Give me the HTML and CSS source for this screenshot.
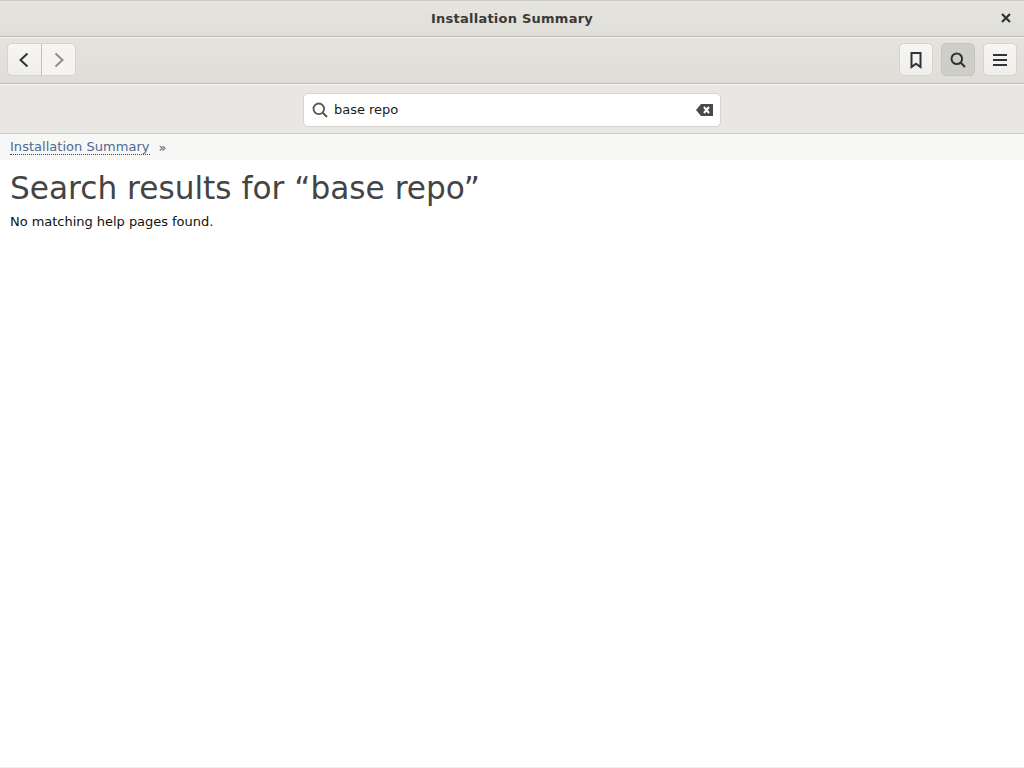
FILE: index.html
```html
<!DOCTYPE html>
<html lang="en">
<head>
<meta charset="utf-8">
<title>Installation Summary</title>
<link rel="stylesheet" href="styles.css">
</head>
<body>
<div class="app">
  <header class="titlebar">
    <span class="title">Installation Summary</span>
    <button class="close" aria-label="Close">
      <svg width="16" height="16" viewBox="0 0 16 16"><path d="M4 4l8 8M12 4l-8 8" class="ink" stroke-width="2.2" fill="none"/></svg>
    </button>
  </header>
  <div class="toolbar">
    <div class="nav-group">
      <button class="btn seg-left" aria-label="Back">
        <svg width="16" height="18" viewBox="0 0 16 18"><path d="M10.500 2.500L3.500 9l7 6.500" class="ink" stroke-width="2" fill="none"/></svg>
      </button>
      <button class="btn seg-right" aria-label="Forward">
        <svg width="16" height="18" viewBox="0 0 16 18"><path d="M4.500 2.500l7 6.500-7 6.500" class="dim" stroke-width="2" fill="none"/></svg>
      </button>
    </div>
    <div class="tools">
      <button class="btn square" aria-label="Bookmarks">
        <svg width="16" height="18" viewBox="0 0 16 18"><path d="M3.500 2h9v14L8 12.800 3.500 16z" class="ink" stroke-width="2" fill="none"/></svg>
      </button>
      <button class="btn square active" aria-label="Search">
        <svg width="18" height="18" viewBox="0 0 18 18"><circle cx="7.800" cy="7.800" r="5.300" class="ink" stroke-width="2" fill="none"/><path d="M11.800 11.800L16 16" class="ink" stroke-width="2.200" fill="none"/></svg>
      </button>
      <button class="btn square" aria-label="Menu">
        <svg width="16" height="16" viewBox="0 0 16 16"><path d="M1 3h14M1 8h14M1 13h14" class="ink" stroke-width="2" fill="none"/></svg>
      </button>
    </div>
  </div>
  <div class="searchbar">
    <div class="entry">
      <svg class="entry-icon" width="16" height="16" viewBox="0 0 16 16"><circle cx="6.800" cy="6.800" r="5.300" class="soft" stroke-width="1.800" fill="none"/><path d="M10.800 10.800L15 15" class="soft" stroke-width="2" fill="none"/></svg>
      <span class="entry-text">base repo</span>
      <svg class="entry-clear" width="17" height="12" viewBox="0 0 17 12"><path d="M5 0h12v12H5L0 6z" fill="#4a4a48"/><path d="M8 3l5 6M13 3l-5 6" stroke="#fff" stroke-width="2" fill="none"/></svg>
    </div>
  </div>
  <nav class="crumbs">
    <a class="crumb-link" href="#">Installation Summary</a>
    <span class="crumb-sep">»</span>
  </nav>
  <main class="content">
    <h1 class="heading">Search results for “base repo”</h1>
    <p class="message">No matching help pages found.</p>
  </main>
</div>
</body>
</html>
```
FILE: styles.css
```css
* { box-sizing: border-box; }
html, body { margin: 0; height: 100%; }
body { font-family: "DejaVu Sans", sans-serif; background: #fff; color: #000; }
button { padding: 0; margin: 0; font: inherit; display: flex; align-items: center; justify-content: center; }
.ink { stroke: #2e3436; }
.dim { stroke: #8f8f8c; }
.soft { stroke: #555753; }

.app { width: 1024px; height: 768px; display: flex; flex-direction: column; overflow: hidden; }

.titlebar {
  height: 37px; flex: none; display: flex; align-items: center; justify-content: center; position: relative;
  background: linear-gradient(#e6e4df, #e0ded9);
  border-top: 1px solid #cfccc6;
  border-bottom: 1px solid #bdbab3;
}
.title { font-size: 13px; font-weight: 700; color: #3a3a38; letter-spacing: 0.24px; }
.close { position: absolute; right: 10px; top: 9px; width: 16px; height: 16px; background: none; border: 0; }

.toolbar {
  height: 47px; flex: none; display: flex; align-items: center; justify-content: space-between; padding: 1px 7px 3px;
  background: linear-gradient(#e5e3de, #dfddd8);
  border-top: 1px solid #f3f2ef;
  border-bottom: 1px solid #bdbab3;
}
.nav-group { display: flex; }
.tools { display: flex; gap: 8px; }
.btn {
  height: 33px; background: linear-gradient(#f7f6f4, #efeeeb);
  border: 1px solid #d6d3cd;
}
.seg-left { width: 35px; border-radius: 5px 0 0 5px; border-right: 1px solid #c4c1bb; }
.seg-right { width: 34px; border-radius: 0 5px 5px 0; border-left: 0; background: #f5f4f2; }
.square { width: 34px; border-radius: 5px; }
.active { background: #cfcdc8; border-color: #c6c3bd; }

.searchbar {
  height: 50px; flex: none; display: flex; align-items: center; justify-content: center; padding-top: 1px;
  background: #e9e7e3;
  border-top: 1px solid #f7f6f4;
  border-bottom: 1px solid #cfccc6;
}
.entry {
  width: 418px; height: 34px; display: flex; align-items: center; padding: 0 7px 0 8px;
  background: #fff; border: 1px solid #d6d3cd; border-radius: 5px;
}
.entry-icon { flex: none; }
.entry-text { margin-left: 6px; font-size: 13px; color: #1a1a1a; flex: 1; letter-spacing: -0.03px; }
.entry-clear { flex: none; margin-right: 0; }

.crumbs {
  height: 26px; flex: none; display: flex; align-items: center; padding: 0 10px;
  background: #f7f7f6; font-size: 13px;
}
.crumb-link { color: #4c6a94; text-decoration: none; border-bottom: 1px dotted #2a4a7a; line-height: 15px; letter-spacing: 0.03px; }
.crumb-sep { margin-left: 9px; color: #555; }

.content { flex: 1; padding: 0 10px; background: #fff; border-bottom: 1px solid #eeeeec; }
.heading { margin: 9px 0 0; font-size: 31.2px; line-height: 38px; font-weight: 400; color: #444; }
.message { margin: 6px 0 0; font-size: 13px; line-height: 18px; color: #111; letter-spacing: -0.03px; }
```
